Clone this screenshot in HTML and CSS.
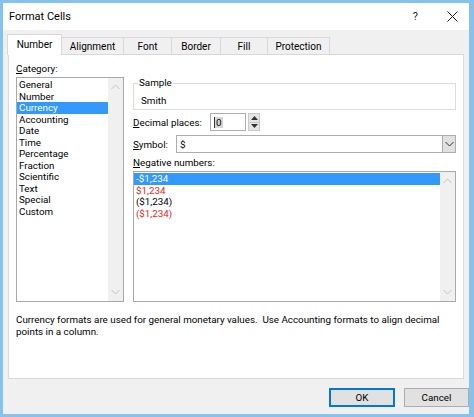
FILE: index.html
```html
<!DOCTYPE html>
<html>
<head>
<meta charset="utf-8">
<title>Format Cells</title>
<link rel="stylesheet" href="styles.css">
</head>
<body>
<div class="window">
  <div class="titlebar">
    <span class="title">Format Cells</span>
    <span class="help">?</span>
    <svg class="close" width="11" height="11" viewBox="0 0 11 11"><path d="M0.5 0.5 L10.5 10.5 M10.5 0.5 L0.5 10.5" stroke="#1a1a1a" stroke-width="1" fill="none"/></svg>
  </div>
  <div class="tabs">
    <div class="tab sel w-number">Number</div>
    <div class="tab w-align">Alignment</div>
    <div class="tab w-font">Font</div>
    <div class="tab w-border">Border</div>
    <div class="tab w-fill">Fill</div>
    <div class="tab w-prot">Protection</div>
  </div>
  <div class="panel">
    <div class="cols">
      <div class="left">
        <div class="label"><u>C</u>ategory:</div>
        <div class="listbox cat">
          <div class="items">
            <div class="item">General</div>
            <div class="item">Number</div>
            <div class="item selected">Currency</div>
            <div class="item">Accounting</div>
            <div class="item">Date</div>
            <div class="item">Time</div>
            <div class="item">Percentage</div>
            <div class="item">Fraction</div>
            <div class="item">Scientific</div>
            <div class="item">Text</div>
            <div class="item">Special</div>
            <div class="item">Custom</div>
          </div>
          <div class="scroll">
            <svg width="9" height="6" viewBox="0 0 9 6"><path d="M0.5 5 L4.5 1 L8.5 5" stroke="#c2c2c2" fill="none"/></svg>
            <svg width="9" height="6" viewBox="0 0 9 6"><path d="M0.5 1 L4.5 5 L8.5 1" stroke="#c2c2c2" fill="none"/></svg>
          </div>
        </div>
      </div>
      <div class="right">
        <fieldset class="sample">
          <legend>Sample</legend>
          <div class="sample-text">Smith</div>
        </fieldset>
        <div class="row decimal">
          <span class="row-label dec-label"><u>D</u>ecimal places:</span>
          <div class="edit spin-edit"><span class="sel-text">0</span></div>
          <div class="spin">
            <div class="spin-btn"><svg width="7" height="4" viewBox="0 0 7 4"><path d="M0 4 L3.5 0 L7 4 Z" fill="#333"/></svg></div>
            <div class="spin-btn"><svg width="7" height="4" viewBox="0 0 7 4"><path d="M0 0 L3.5 4 L7 0 Z" fill="#333"/></svg></div>
          </div>
        </div>
        <div class="row symbol">
          <span class="row-label sym-label"><u>S</u>ymbol:</span>
          <div class="combo">
            <span class="combo-text">$</span>
            <div class="combo-btn"><svg width="9" height="6" viewBox="0 0 9 6"><path d="M0.5 1 L4.5 5 L8.5 1" stroke="#333" fill="none"/></svg></div>
          </div>
        </div>
        <div class="label neg-label"><u>N</u>egative numbers:</div>
        <div class="listbox neg">
          <div class="items">
            <div class="item selected">-$1,234</div>
            <div class="item red">$1,234</div>
            <div class="item">($1,234)</div>
            <div class="item red">($1,234)</div>
          </div>
          <div class="scroll">
            <svg width="9" height="6" viewBox="0 0 9 6"><path d="M0.5 5 L4.5 1 L8.5 5" stroke="#c2c2c2" fill="none"/></svg>
            <svg width="9" height="6" viewBox="0 0 9 6"><path d="M0.5 1 L4.5 5 L8.5 1" stroke="#c2c2c2" fill="none"/></svg>
          </div>
        </div>
      </div>
    </div>
    <p class="desc">Currency formats are used for general monetary values.&nbsp; Use Accounting formats to align decimal points in a column.</p>
  </div>
  <div class="buttons">
    <div class="btn default">OK</div>
    <div class="btn">Cancel</div>
  </div>
</div>
</body>
</html>
```

FILE: styles.css
```css
html, body {
  margin: 0;
  padding: 0;
  background: #ffffff;
}

body {
  font-family: Roboto, "Noto Sans", sans-serif;
  font-size: 9.8px;
  color: #000;
}

.window {
  width: 474px;
  height: 417px;
  box-sizing: border-box;
  border: 3px solid #85c3ee;
  border-right-width: 5px;
  background: #f0f0f0;
  display: flex;
  flex-direction: column;
}

.titlebar {
  height: 27px;
  background: #ffffff;
  display: flex;
  align-items: center;
  padding-left: 6px;
  padding-right: 11px;
  flex-shrink: 0;
}

.title {
  font-size: 11px;
  color: #000;
}

.help {
  margin-left: auto;
  font-size: 11px;
  color: #222;
  margin-right: 29px;
}

.close {
  display: block;
}

.tabs {
  display: flex;
  align-items: flex-end;
  height: 24px;
  padding-left: 5px;
  position: relative;
  z-index: 1;
  flex-shrink: 0;
}

.tab {
  height: 17px;
  box-sizing: border-box;
  border: 1px solid #d9d9d9;
  border-bottom: none;
  margin-left: -1px;
  display: flex;
  align-items: center;
  justify-content: center;
  background: #f0f0f0;
  font-size: 10px;
}

.tab.sel {
  height: 21px;
  background: #ffffff;
  margin-bottom: -1px;
  margin-left: -1px;
  padding-bottom: 1px;
}

.w-number { width: 55px; }
.w-align { width: 63px; }
.w-font { width: 49px; }
.w-border { width: 50px; }
.w-fill { width: 48px; }
.w-prot { width: 63px; }

.panel {
  margin: 0 5px;
  height: 325px;
  box-sizing: border-box;
  border: 1px solid #d9d9d9;
  background: #ffffff;
  padding: 8px 7px 0 7px;
  flex-shrink: 0;
}

.cols {
  display: flex;
  gap: 9px;
}

.left {
  width: 108px;
  flex-shrink: 0;
}

.right {
  flex: 1;
  min-width: 0;
}

.label {
  line-height: 12px;
  height: 12px;
}

.listbox {
  box-sizing: border-box;
  border: 1px solid #a9a9a9;
  background: #fff;
  display: flex;
}

.listbox.cat {
  margin-top: 2px;
  height: 225px;
}

.listbox.neg {
  margin-top: 2px;
  height: 131px;
}

.items {
  flex: 1;
  min-width: 0;
  padding-top: 1px;
}

.item {
  height: 11.55px;
  line-height: 11.55px;
  padding-left: 2px;
  white-space: nowrap;
}

.item.selected {
  background: #3399ff;
  color: #fff;
}

.item.red {
  color: #ee2222;
}

.scroll {
  width: 15px;
  flex-shrink: 0;
  background: #f0f0f0;
  display: flex;
  flex-direction: column;
  align-items: center;
  justify-content: space-between;
  padding: 6px 0 6px;
  box-sizing: border-box;
}

.scroll svg {
  display: block;
}

.sample {
  margin: 14px 0 0 0;
  padding: 6px 6px 2px 6px;
  border: 1px solid #dcdcdc;
  min-width: 0;
}

.sample legend {
  padding: 0 1px;
  margin-left: -2px;
  line-height: 12px;
}

.sample-text {
  line-height: 12px;
  padding-left: 1px;
}

.row {
  display: flex;
  align-items: center;
  height: 18px;
}

.row.decimal {
  margin-top: 3px;
}

.row.symbol {
  margin-top: 4px;
}

.row-label {
  flex-shrink: 0;
}

.dec-label {
  width: 77px;
}

.sym-label {
  width: 43px;
}

.edit {
  box-sizing: border-box;
  height: 18px;
  border: 1px solid #abadb3;
  background: #fff;
  display: flex;
  align-items: center;
}

.spin-edit {
  width: 36px;
  padding-left: 3px;
}

.sel-text {
  display: inline-block;
  background: #d8d8d8;
  border-left: 1px solid #333;
  line-height: 11px;
  padding: 0 1px;
}

.spin {
  margin-left: 2px;
  width: 12px;
  height: 18px;
  box-sizing: border-box;
  border: 1px solid #c9c9c9;
  background: #e6e6e6;
  display: flex;
  flex-direction: column;
}

.spin-btn {
  flex: 1;
  display: flex;
  align-items: center;
  justify-content: center;
}

.spin-btn + .spin-btn {
  border-top: 1px solid #c9c9c9;
}

.spin-btn svg {
  display: block;
}

.combo {
  flex: 1;
  height: 18px;
  box-sizing: border-box;
  border: 1px solid #abadb3;
  background: #fff;
  display: flex;
  align-items: center;
}

.combo-text {
  flex: 1;
  padding-left: 3px;
}

.combo-btn {
  width: 14px;
  height: 18px;
  margin: -1px -1px -1px 0;
  box-sizing: border-box;
  border: 1px solid #adadad;
  background: #e1e1e1;
  display: flex;
  align-items: center;
  justify-content: center;
}

.combo-btn svg {
  display: block;
}

.neg-label {
  margin-top: 4px;
}

.desc {
  margin: 12px 0 0 0;
  line-height: 12px;
}

.buttons {
  display: flex;
  justify-content: flex-end;
  gap: 9px;
  padding: 9px 0 0 0;
}

.btn {
  width: 66px;
  height: 19px;
  box-sizing: border-box;
  border: 1px solid #adadad;
  background: #e1e1e1;
  display: flex;
  align-items: center;
  justify-content: center;
}

.btn + .btn {
  width: 65px;
}

.btn.default {
  border: 1px solid #0078d7;
  box-shadow: inset 0 0 0 1px #0078d7;
}
```
